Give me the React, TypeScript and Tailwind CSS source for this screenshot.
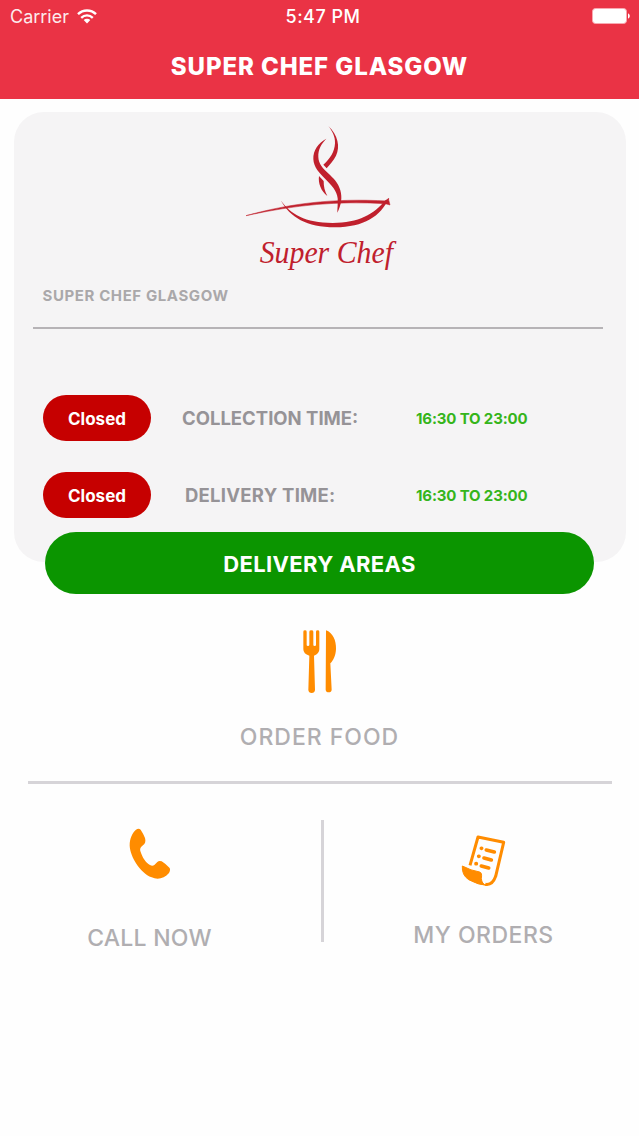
import React from 'react';

const StatusBar = () => (
  <div className="grid h-8 grid-cols-3 items-center pl-[10px] pr-[9px] text-[18px] text-white">
    <div className="flex items-center gap-[8px]">
      <span className="opacity-90">Carrier</span>
      <svg width="20" height="15" viewBox="0 0 20 15" fill="none" stroke="currentColor" strokeWidth="2.4" aria-hidden="true">
        <path d="M1 5.2C6 .2 14 .2 19 5.2" />
        <path d="M4.2 8.8C7.5 5.6 12.5 5.6 15.8 8.8" />
        <path d="M10 14.4 6.7 11.1C8.6 9.3 11.4 9.3 13.3 11.1Z" fill="currentColor" stroke="none" />
      </svg>
    </div>
    <span className="whitespace-nowrap pl-[6px] text-center font-medium tracking-[0.5px]">5:47 PM</span>
    <svg className="justify-self-end" width="38" height="16" viewBox="0 0 38 16" aria-hidden="true">
      <rect x=".5" y=".5" width="34" height="15" rx="3" fill="#fff" stroke="#f8a9b1" />
      <path d="M36 5.5c2.4.6 2.4 4.4 0 5z" fill="#fff" />
    </svg>
  </div>
);

const Logo = () => (
  <svg width="180" height="165" viewBox="0 0 540 495" fill="#c0202d" role="img" aria-label="Super Chef">
    <path d="M295 33C324 61 331 95 318 122C311 137 299 149 290 160L280 149C300 132 314 110 315 85C316 64 306 47 295 33Z" />
    <path d="M289 71C265 83 249 106 250 132C252 181 320 204 323 250C324 267 322 281 322 293C334 269 337 249 331 226C321 181 266 168 265 126C264 103 274 86 289 71Z" />
    <path d="M267 183C264 205 273 228 292 243C284 228 281 215 281 198Z" />
    <path
      d="M48 302C180 266 300 249 475 258L475 250L480 270L466 266C320 258 200 269 48 302Z"
      stroke="#c0202d"
      strokeWidth="1.5"
    />
    <path d="M152 256C182 298 225 324 308 324C386 324 432 298 466 256L478 249C450 305 403 336 315 337C230 337 180 307 152 256Z" />
    <text
      x="89"
      y="443"
      fontSize="92"
      fontStyle="italic"
      fontFamily="'Liberation Serif', serif"
      textLength="400"
      lengthAdjust="spacingAndGlyphs"
    >
      Super Chef
    </text>
  </svg>
);

const CutleryIcon = () => (
  <svg width="35" height="65" viewBox="66 27 105 195" fill="#ff8c00" aria-hidden="true">
    <path d="M70 35Q70 31 75 31T80 35V75Q80 78 84 78T88 75V35Q88 31 94 31T100 35V75Q100 78 104 78T108 75V35Q108 31 113 31T118 35V88Q118 101 102 107L105 210Q104 219 95 219T85 210L88 107Q70 102 70 88Z" />
    <path d="M138 31C158 38 169 61 168 87C167 107 160 121 151 130L155 209Q154 217 146 217T137 209Z" />
  </svg>
);

const PhoneIcon = () => (
  <svg width="42" height="52" viewBox="58 38 126 156" fill="#ff8c00" aria-hidden="true">
    <path d="M79 43Q87 37 93 43Q101 55 106 68Q109 80 104 86L95 94Q90 98 92 107C98 126 108 143 121 149Q128 153 134 149L143 140Q148 135 156 138Q170 147 180 158Q183 165 178 173C164 190 143 194 126 186C91 172 62 125 60 91C60 69 68 52 79 43Z" />
  </svg>
);

const OrdersIcon = () => (
  <svg width="45" height="52" viewBox="47 31 135 156" fill="none" stroke="#ff8c00" strokeWidth="9" strokeLinejoin="round" aria-hidden="true">
    <path d="M74 122 98 37 175 53 151 155Q141 183 120 179" />
    <path d="M51 124Q77 138 103 142Q111 144 108 161Q109 179 124 182Q99 181 70 165Q49 151 51 124Z" fill="#ff8c00" strokeWidth="3" />
    <path d="m123 76 24 6m-31 18 22 6m-30 18 22 6" strokeWidth="11" strokeLinecap="round" />
    <path d="M108 71h1m-9 24h1m-9 22h1" strokeWidth="11" strokeLinecap="round" />
  </svg>
);

interface TimeRowProps {
  label: string;
  hours: string;
  labelClass: string;
}

const TimeRow = ({ label, hours, labelClass }: TimeRowProps) => (
  <div className="flex h-[46px] items-center">
    <span className="flex h-[46px] w-[108px] items-center justify-center rounded-full bg-[#c60000] pt-[3px] text-[17px] font-bold text-white">
      Closed
    </span>
    <span className={`w-[265px] whitespace-nowrap text-[18.5px] font-bold text-[#969397] ${labelClass}`}>{label}</span>
    <span className="whitespace-nowrap pt-[3px] text-[15px] font-bold tracking-[-0.15px] text-[#35b51b]">{hours}</span>
  </div>
);

export default function App() {
  return (
    <div className="min-h-[1136px] w-[639px] overflow-hidden bg-[#fefefe] font-['Inter',sans-serif]">
      <header className="h-[99px] bg-[#ea3345]">
        <StatusBar />
        <h1 className="pt-[18px] text-center text-[24px] leading-[34px] font-extrabold tracking-[0.9px] text-white">
          SUPER CHEF GLASGOW
        </h1>
      </header>

      <main className="pt-[13px]">
        <section className="mx-auto h-[450px] w-[612px] rounded-[30px] bg-[#f5f4f5] pt-[3px]">
          <div className="pl-[216px]">
            <Logo />
          </div>
          <h2 className="pt-[5px] pl-[29px] text-[15px] leading-[22px] font-bold tracking-[0.6px] text-[#aaa8aa]">
            SUPER CHEF GLASGOW
          </h2>
          <div className="mt-[20px] ml-[19px] w-[570px] border-t-2 border-[#b6b3b6]" />
          <div className="mt-[66px] flex flex-col gap-[31px] pl-[29.5px]">
            <TimeRow label="COLLECTION TIME:" hours="16:30 TO 23:00" labelClass="pt-[2px] pl-[31px] tracking-[0px]" />
            <TimeRow label="DELIVERY TIME:" hours="16:30 TO 23:00" labelClass="pt-[2px] pl-[34px] tracking-[0.25px]" />
          </div>
        </section>

        <button className="relative mx-auto -mt-[30px] flex h-[62px] w-[549px] items-center justify-center rounded-full bg-[#0b9500] pt-[3px] text-[22px] font-bold tracking-[0.35px] text-white">
          DELIVERY AREAS
        </button>

        <button className="flex w-full flex-col items-center pt-[35px]">
          <CutleryIcon />
          <span className="pt-[28px] text-[23px] leading-[30px] font-medium tracking-[1px] text-[#b0aeb1]">ORDER FOOD</span>
        </button>
        <div className="mx-auto mt-[29px] h-[3px] w-[584px] bg-[#d6d4d8]" />

        <nav className="flex pt-[36px]">
          <button className="flex w-[321px] flex-col items-center pt-[8px] pr-[22px]">
            <PhoneIcon />
            <span className="pt-[43px] text-[23px] leading-[30px] font-medium tracking-[0.25px] text-[#b0aeb1]">CALL NOW</span>
          </button>
          <div className="h-[122px] w-[3px] bg-[#d6d4d8]" />
          <button className="flex w-[315px] flex-col items-center pt-[15px] pl-[4px]">
            <OrdersIcon />
            <span className="pt-[33px] text-[23px] leading-[30px] font-medium tracking-[0.5px] text-[#b0aeb1]">MY ORDERS</span>
          </button>
        </nav>
      </main>
    </div>
  );
}
